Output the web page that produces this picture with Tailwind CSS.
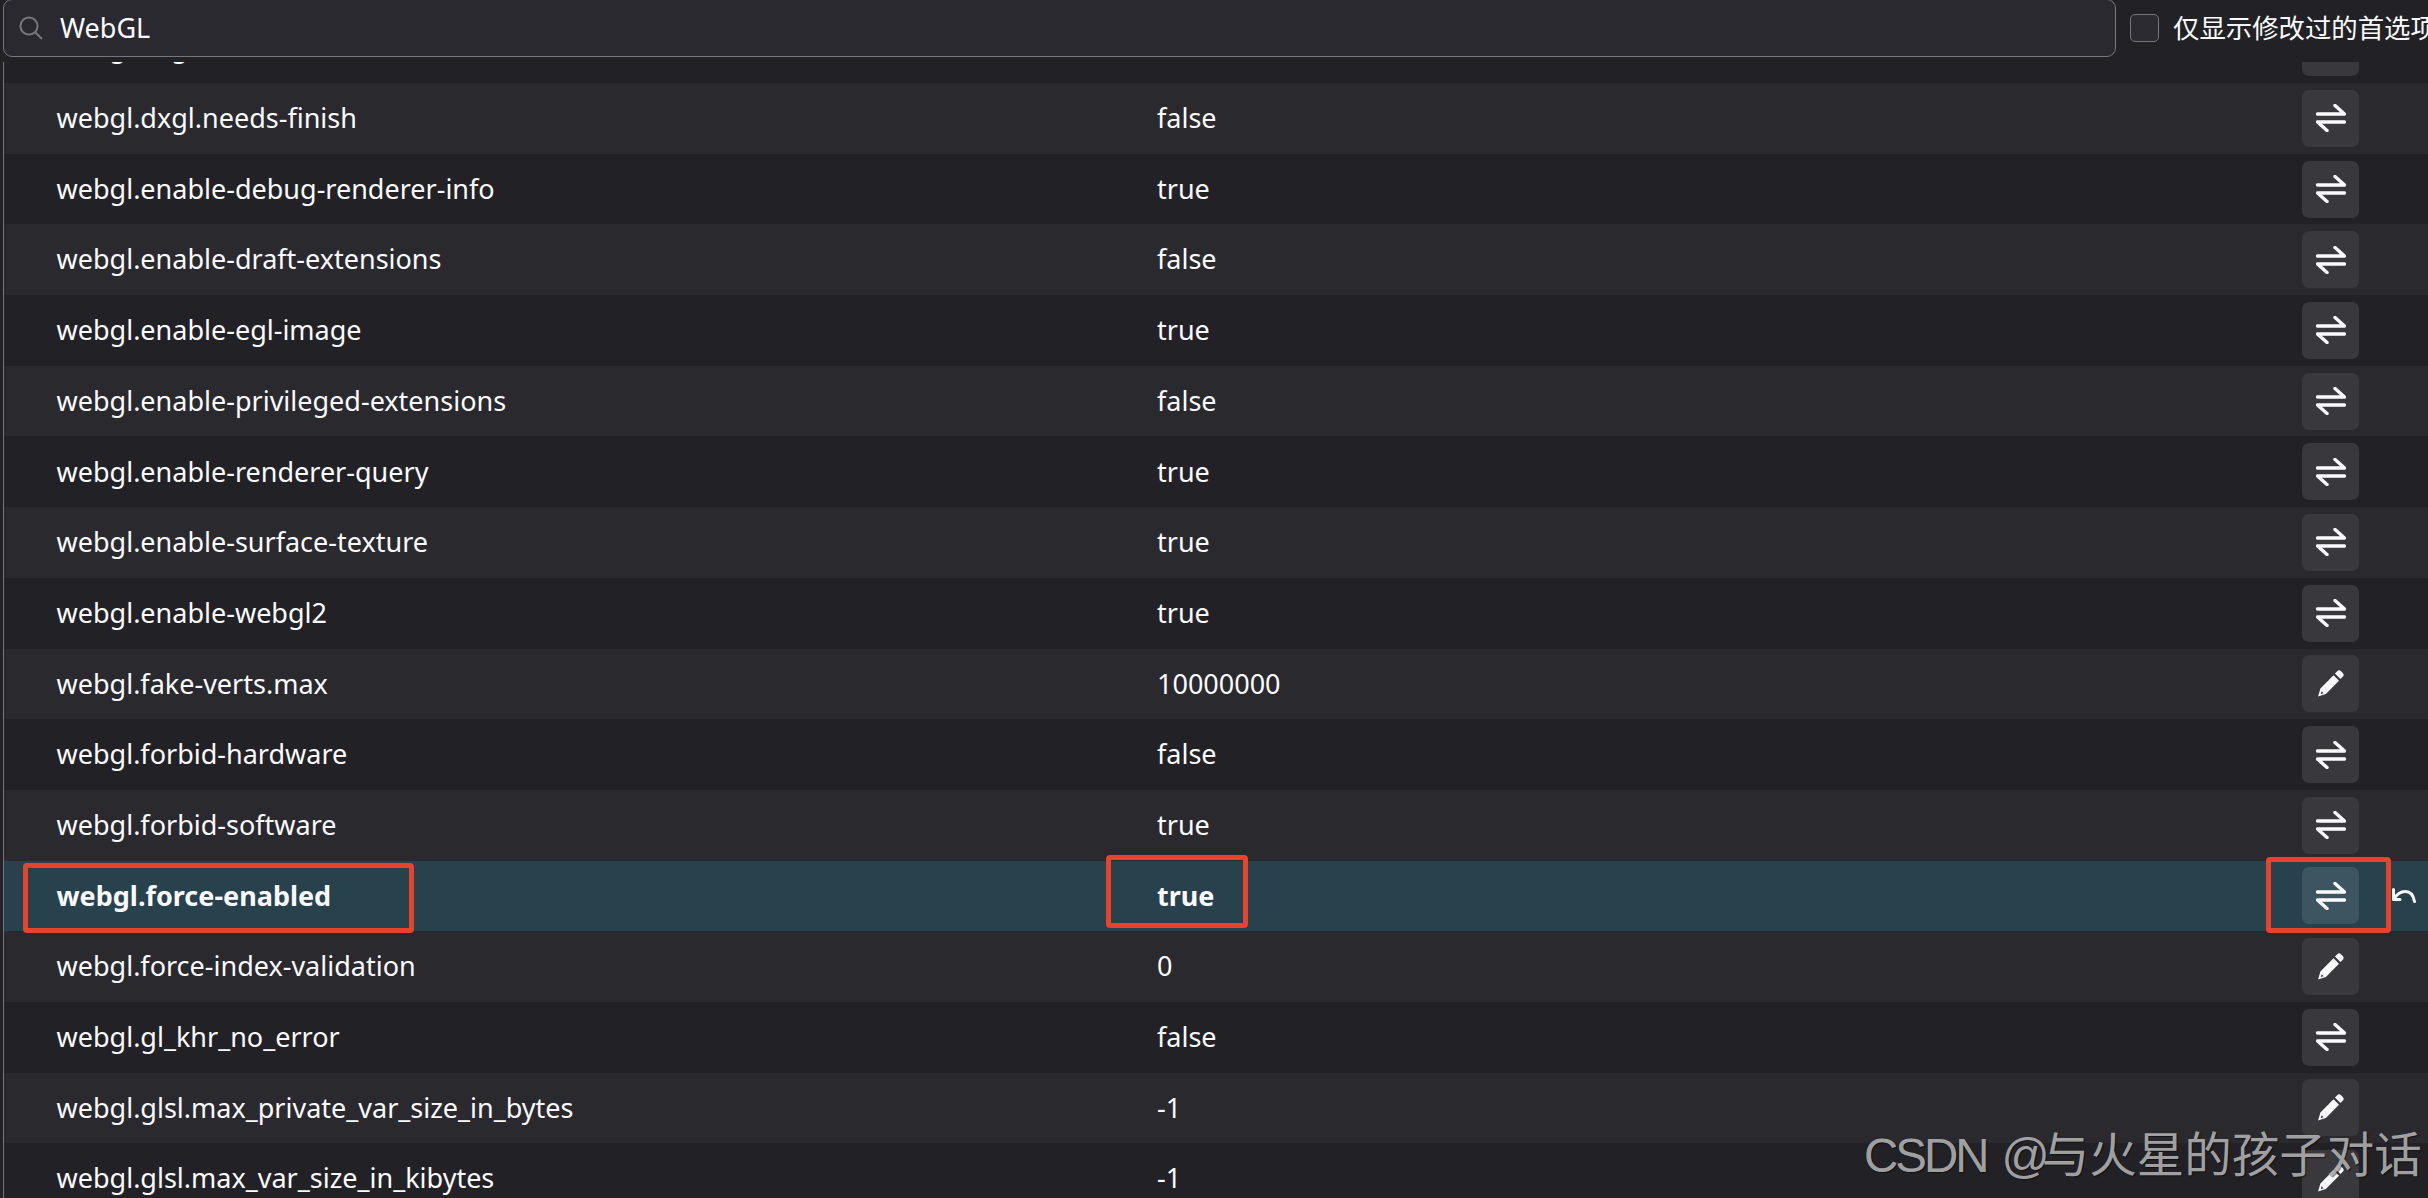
<!DOCTYPE html>
<html lang="zh-CN">

<head>
  <meta charset="UTF-8">
  <title>about:config</title>
  <script src="https://cdn.jsdelivr.net/npm/@tailwindcss/browser@4"></script>
</head>

<body class="bg-[#222226] overflow-hidden font-['Noto_Sans','Noto_Sans_CJK_SC',sans-serif] text-[#fbfbfe] text-[27px]">
  <svg class="hidden">
    <symbol id="swap" viewBox="0 0 30 28">
      <path d="M1.5 10H28.5L19 1.5M28.5 18H1.5L11 26.5" fill="none" stroke="currentColor" stroke-width="3.4" stroke-linecap="round" stroke-linejoin="round"/>
    </symbol>
    <symbol id="pencil" viewBox="0 0 26 26">
      <path d="M19.5 1.2a2.6 2.6 0 0 1 3.6 0l1.7 1.7a2.6 2.6 0 0 1 0 3.6l-2.2 2.2-5.3-5.3zM15.9 5l5.3 5.3L8.5 23 1 25.5 3.3 17.8zM3.6 23.2l2.8-.9-1.9-1.9z" fill="currentColor" fill-rule="evenodd"/>
    </symbol>
  </svg>

  <div class="relative w-[2428px] h-[1198px] overflow-hidden">
    <!-- Search header -->
    <header class="h-[62px] flex items-start bg-[#222226]">
      <div class="ml-[3px] w-[2113px] shrink-0 h-[58px] -mt-[1px] flex items-center gap-[17px] pl-[15px] bg-[#29292f] border border-[#77777c] rounded-[9px]">
        <svg class="w-[24px] h-[24px] text-[#77777c]" viewBox="0 0 24 24" fill="none" stroke="currentColor" stroke-width="2"><circle cx="10" cy="10" r="8.6"/><path d="M16.2 16.2L23 23"/></svg>
        <span>WebGL</span>
      </div>
      <div class="ml-[14px] mt-[14px] w-[29px] h-[28px] shrink-0 bg-[#2b2b31] border border-[#77777c] rounded-[5px]"></div>
      <span class="ml-[14px] mt-[8px] whitespace-nowrap text-[26.4px] leading-[40px]">仅显示修改过的首选项</span>
    </header>

    <!-- Pref rows -->
    <main class="ml-[3px] border-l border-[#77777c]">
      <div class="h-[21px] overflow-hidden bg-[#222226] flex flex-col justify-end">
        <div class="flex h-[70.7px] shrink-0 items-center pl-[52.5px]">
          <span class="w-[1100.5px]">webgl.dxgl.enabled</span><span class="w-[1145px]">false</span>
          <button class="w-[57px] h-[57px] rounded-[7px] bg-[#38383d]"></button>
        </div>
      </div>

      <div class="flex h-[70.7px] items-center pl-[52.5px] bg-[#29292e]">
        <span class="w-[1100.5px]">webgl.dxgl.needs-finish</span><span class="w-[1145px]">false</span>
        <button class="w-[57px] h-[57px] rounded-[7px] bg-[#38383d] flex items-center justify-center"><svg class="w-[30px] h-[28px]"><use href="#swap"/></svg></button>
      </div>
      <div class="flex h-[70.7px] items-center pl-[52.5px] bg-[#222226]">
        <span class="w-[1100.5px]">webgl.enable-debug-renderer-info</span><span class="w-[1145px]">true</span>
        <button class="w-[57px] h-[57px] rounded-[7px] bg-[#38383d] flex items-center justify-center"><svg class="w-[30px] h-[28px]"><use href="#swap"/></svg></button>
      </div>
      <div class="flex h-[70.7px] items-center pl-[52.5px] bg-[#29292e]">
        <span class="w-[1100.5px]">webgl.enable-draft-extensions</span><span class="w-[1145px]">false</span>
        <button class="w-[57px] h-[57px] rounded-[7px] bg-[#38383d] flex items-center justify-center"><svg class="w-[30px] h-[28px]"><use href="#swap"/></svg></button>
      </div>
      <div class="flex h-[70.7px] items-center pl-[52.5px] bg-[#222226]">
        <span class="w-[1100.5px]">webgl.enable-egl-image</span><span class="w-[1145px]">true</span>
        <button class="w-[57px] h-[57px] rounded-[7px] bg-[#38383d] flex items-center justify-center"><svg class="w-[30px] h-[28px]"><use href="#swap"/></svg></button>
      </div>
      <div class="flex h-[70.7px] items-center pl-[52.5px] bg-[#29292e]">
        <span class="w-[1100.5px]">webgl.enable-privileged-extensions</span><span class="w-[1145px]">false</span>
        <button class="w-[57px] h-[57px] rounded-[7px] bg-[#38383d] flex items-center justify-center"><svg class="w-[30px] h-[28px]"><use href="#swap"/></svg></button>
      </div>
      <div class="flex h-[70.7px] items-center pl-[52.5px] bg-[#222226]">
        <span class="w-[1100.5px]">webgl.enable-renderer-query</span><span class="w-[1145px]">true</span>
        <button class="w-[57px] h-[57px] rounded-[7px] bg-[#38383d] flex items-center justify-center"><svg class="w-[30px] h-[28px]"><use href="#swap"/></svg></button>
      </div>
      <div class="flex h-[70.7px] items-center pl-[52.5px] bg-[#29292e]">
        <span class="w-[1100.5px]">webgl.enable-surface-texture</span><span class="w-[1145px]">true</span>
        <button class="w-[57px] h-[57px] rounded-[7px] bg-[#38383d] flex items-center justify-center"><svg class="w-[30px] h-[28px]"><use href="#swap"/></svg></button>
      </div>
      <div class="flex h-[70.7px] items-center pl-[52.5px] bg-[#222226]">
        <span class="w-[1100.5px]">webgl.enable-webgl2</span><span class="w-[1145px]">true</span>
        <button class="w-[57px] h-[57px] rounded-[7px] bg-[#38383d] flex items-center justify-center"><svg class="w-[30px] h-[28px]"><use href="#swap"/></svg></button>
      </div>
      <div class="flex h-[70.7px] items-center pl-[52.5px] bg-[#29292e]">
        <span class="w-[1100.5px]">webgl.fake-verts.max</span><span class="w-[1145px]">10000000</span>
        <button class="w-[57px] h-[57px] rounded-[7px] bg-[#38383d] flex items-center justify-center"><svg class="w-[27px] h-[27px]"><use href="#pencil"/></svg></button>
      </div>
      <div class="flex h-[70.7px] items-center pl-[52.5px] bg-[#222226]">
        <span class="w-[1100.5px]">webgl.forbid-hardware</span><span class="w-[1145px]">false</span>
        <button class="w-[57px] h-[57px] rounded-[7px] bg-[#38383d] flex items-center justify-center"><svg class="w-[30px] h-[28px]"><use href="#swap"/></svg></button>
      </div>
      <div class="flex h-[70.7px] items-center pl-[52.5px] bg-[#29292e]">
        <span class="w-[1100.5px]">webgl.forbid-software</span><span class="w-[1145px]">true</span>
        <button class="w-[57px] h-[57px] rounded-[7px] bg-[#38383d] flex items-center justify-center"><svg class="w-[30px] h-[28px]"><use href="#swap"/></svg></button>
      </div>
      <!-- modified pref -->
      <div class="flex h-[70.7px] items-center pl-[52.5px] bg-[#28424d] font-bold">
        <span class="w-[1100.5px]">webgl.force-enabled</span><span class="w-[1145px]">true</span>
        <button class="w-[57px] h-[57px] rounded-[7px] bg-[#3c5560] flex items-center justify-center"><svg class="w-[30px] h-[28px]"><use href="#swap"/></svg></button>
        <svg class="ml-[33px] w-[24px] h-[15px]" viewBox="0 0 24 15" fill="none" stroke="currentColor" stroke-width="3" stroke-linecap="round" stroke-linejoin="round"><path d="M1.5 1.5V11.5H8M2 11C7 2 20 -1 22.5 13.5"/></svg>
      </div>
      <div class="flex h-[70.7px] items-center pl-[52.5px] bg-[#29292e]">
        <span class="w-[1100.5px]">webgl.force-index-validation</span><span class="w-[1145px]">0</span>
        <button class="w-[57px] h-[57px] rounded-[7px] bg-[#38383d] flex items-center justify-center"><svg class="w-[27px] h-[27px]"><use href="#pencil"/></svg></button>
      </div>
      <div class="flex h-[70.7px] items-center pl-[52.5px] bg-[#222226]">
        <span class="w-[1100.5px]">webgl.gl_khr_no_error</span><span class="w-[1145px]">false</span>
        <button class="w-[57px] h-[57px] rounded-[7px] bg-[#38383d] flex items-center justify-center"><svg class="w-[30px] h-[28px]"><use href="#swap"/></svg></button>
      </div>
      <div class="flex h-[70.7px] items-center pl-[52.5px] bg-[#29292e]">
        <span class="w-[1100.5px]">webgl.glsl.max_private_var_size_in_bytes</span><span class="w-[1145px]">-1</span>
        <button class="w-[57px] h-[57px] rounded-[7px] bg-[#38383d] flex items-center justify-center"><svg class="w-[27px] h-[27px]"><use href="#pencil"/></svg></button>
      </div>
      <div class="flex h-[70.7px] items-center pl-[52.5px] bg-[#222226]">
        <span class="w-[1100.5px]">webgl.glsl.max_var_size_in_kibytes</span><span class="w-[1145px]">-1</span>
        <button class="w-[57px] h-[57px] rounded-[7px] bg-[#38383d] flex items-center justify-center"><svg class="w-[27px] h-[27px]"><use href="#pencil"/></svg></button>
      </div>
    </main>

    <!-- Red annotation boxes -->
    <div class="absolute left-[23px] top-[863px] w-[391px] h-[70px] border-[5px] border-[#e8432c] rounded-[4px]"></div>
    <div class="absolute left-[1106px] top-[855px] w-[142px] h-[73px] border-[5px] border-[#e8432c] rounded-[4px]"></div>
    <div class="absolute left-[2266px] top-[857px] w-[125px] h-[76px] border-[5px] border-[#e8432c] rounded-[4px]"></div>

    <!-- Watermark -->
    <div class="absolute left-[1864px] top-[1126px] whitespace-nowrap text-[47.5px] leading-[60px] text-[#b4b4b4]/90 font-['Liberation_Sans','Noto_Sans_CJK_SC',sans-serif] [text-shadow:1px_1px_1px_rgba(0,0,0,0.5)]"><span class="tracking-[-3px]">CSDN</span><span class="ml-[15px] mr-[-8px]">@</span>与火星的孩子对话</div>
  </div>
</body>

</html>
